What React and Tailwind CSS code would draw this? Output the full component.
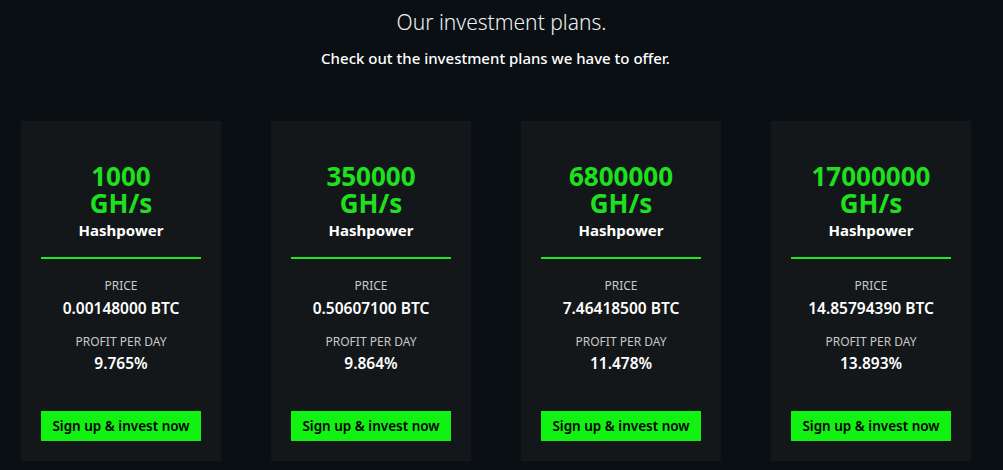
import React from "react";

const plans = [
  { hash: "1000", price: "0.00148000 BTC", profit: "9.765%" },
  { hash: "350000", price: "0.50607100 BTC", profit: "9.864%" },
  { hash: "6800000", price: "7.46418500 BTC", profit: "11.478%" },
  { hash: "17000000", price: "14.85794390 BTC", profit: "13.893%" },
];

export default function App() {
  return (
    <div
      className="w-[1003px] h-[470px] bg-[#090f13] text-white overflow-hidden"
      style={{ fontFamily: '"Noto Sans", "Open Sans", sans-serif' }}
    >
      <div className="pt-[8px] text-center">
        <h1 className="text-[21px] font-light leading-[28px] text-[#f0f0f0]">Our investment plans.</h1>
        <p className="mt-[12px] pr-[12px] text-[15px] font-medium leading-[20px]">Check out the investment plans we have to offer.</p>
      </div>
      <div className="mt-[53px] pl-[21px] flex gap-[50px]">
        {plans.map((p) => (
          <div key={p.hash} className="w-[200px] h-[340px] bg-[#13171a] px-[20px] pt-[42px] flex flex-col items-center text-center">
            <div className="text-[26px] font-bold leading-[27px] text-[#1fe01f]">
              <div>{p.hash}</div>
              <div>GH/s</div>
            </div>
            <div className="text-[15px] font-bold leading-[20px] mt-[3px]">Hashpower</div>
            <div className="w-full h-[2px] bg-[#1ee81e] mt-[17px]"></div>
            <div className="mt-[20px] text-[12px] leading-[14px] text-[#c8c8c8]">PRICE</div>
            <div className="mt-[5px] text-[15.5px] font-semibold leading-[20px]">{p.price}</div>
            <div className="mt-[17px] text-[12px] leading-[14px] text-[#c8c8c8]">PROFIT PER DAY</div>
            <div className="mt-[4px] text-[15.5px] font-semibold leading-[20px]">{p.profit}</div>
            <button className="mt-[38px] w-full h-[30px] bg-[#12f212] text-black text-[13.5px] font-semibold">
              Sign up &amp; invest now
            </button>
          </div>
        ))}
      </div>
    </div>
  );
}
